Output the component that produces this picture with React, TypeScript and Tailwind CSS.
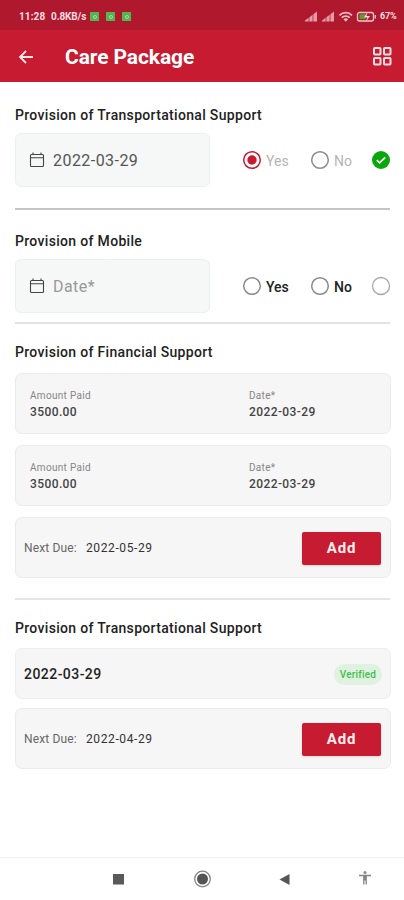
import React from 'react';

interface RadioProps {
    label: string;
    checked?: boolean;
    disabled?: boolean;
}

const payments = [
    { id: 1, amount: '3500.00', date: '2022-03-29' },
    { id: 2, amount: '3500.00', date: '2022-03-29' },
];

const StatusBar: React.FC = () => (
    <div className="flex h-[30px] items-center bg-[#b0182d] pl-[19px] pr-[6px] pt-[3px] text-[10px] font-bold text-[#f8dfe2]">
        <span className="w-[32px] whitespace-nowrap tracking-[0.1px]">11:28</span>
        <span className="w-[39px] whitespace-nowrap text-[10px] tracking-[-0.1px]">0.8KB/s</span>
        <div className="flex gap-[7px]">
            {[0, 1, 2].map((item) => (
                <span key={item} className="flex h-[9px] w-[9px] items-center justify-center bg-[#53b653]">
                    <span className="h-[4px] w-[4px] rounded-full border border-[#a5dc9b]" />
                </span>
            ))}
        </div>
        <svg className="ml-auto" width="72" height="12" viewBox="0 0 72 12" fill="none">
            <path d="M0 10.500V9.500L12 0.500V10.500Z" fill="#e79aa5" />
            <path d="M17 10.500V9.500L29 0.500V10.500Z" fill="#e79aa5" />
            <path d="M4 3v8M8 1v10M21 3v8M25 1v10" stroke="#b0182d" strokeWidth="0.7" />
            <path d="M34.500 4.300C38 0.800 43.500 0.800 47 4.300M36.800 6.700C39 4.500 42.500 4.500 44.700 6.700" stroke="#f0bcc3" strokeWidth="1.800" />
            <path d="M38.500 8.200C40 7 41.500 7 43 8.200L40.800 10.800Z" fill="#f0bcc3" />
            <rect x="52.500" y="1.500" width="16" height="8.500" rx="2" stroke="#f0c6cc" strokeWidth="1.300" />
            <rect x="54.500" y="3.200" width="6" height="5" fill="#5d9d2d" />
            <path d="M62.500 1L59 6.500h3.500L60.500 11L65 5h-3.500Z" fill="#f6dfe2" />
            <path d="M70.300 4v3.500" stroke="#f0c6cc" strokeWidth="1.300" />
        </svg>
        <span className="ml-[3px] w-[18px] whitespace-nowrap text-[9px] tracking-[-0.2px]">67%</span>
    </div>
);

const Header: React.FC = () => (
    <header className="flex h-[52px] items-center bg-[#c61b30] pl-[18px] pr-[12px] text-white">
        <svg className="mt-px" width="16" height="16" viewBox="0 0 16 16" fill="none" stroke="#fbe6e8" strokeWidth="1.800">
            <path d="M15 8H2.200M8 2L2 8l6 6" />
        </svg>
        <h1 className="ml-[31px] pt-[3px] text-[21px] font-bold leading-none tracking-[-0.1px]">Care Package</h1>
        <svg className="ml-auto" width="20" height="20" viewBox="0 0 20 20" fill="none" stroke="#fbdfe2" strokeWidth="2">
            <rect x="2" y="2" width="6.500" height="6.500" rx="0.800" />
            <rect x="12" y="2" width="6.500" height="6.500" rx="0.800" />
            <rect x="2" y="12" width="6.500" height="6.500" rx="0.800" />
            <rect x="12" y="12" width="6.500" height="6.500" rx="0.800" />
        </svg>
    </header>
);

const Heading: React.FC<{ children: React.ReactNode }> = ({ children }) => (
    <h2 className="h-[20px] whitespace-nowrap text-[14px] font-medium leading-[20px] tracking-[0.32px] text-[#222222]">{children}</h2>
);

const DateField: React.FC<{ value?: string }> = ({ value }) => (
    <div className="flex h-[54px] w-[195px] shrink-0 items-center rounded-[6px] border border-[#edf0f0] bg-[#f6f7f7] pl-[13px]">
        <svg width="16" height="16" viewBox="0 0 16 16" fill="none" stroke="#444444" strokeWidth="1.100">
            <rect x="1.500" y="2.500" width="13" height="12" rx="1" />
            <path d="M1.500 5.800h13M4 0.500v2M12 0.500v2" />
        </svg>
        <span className={`ml-[8px] pt-[2px] text-[16px] tracking-[0.45px] ${value ? 'text-[#555555]' : 'text-[#999999]'}`}>
            {value || 'Date*'}
        </span>
    </div>
);

const Radio: React.FC<RadioProps> = ({ label, checked, disabled }) => (
    <div className="flex w-[68px] shrink-0 items-center">
        <svg width="20" height="20" viewBox="0 0 20 20" fill="none">
            <circle cx="10" cy="10" r="8.300" stroke={checked ? '#c61b30' : '#8b8b8b'} strokeWidth="1.500" />
            {checked && <circle cx="10" cy="10" r="4.700" fill="#c61b30" />}
        </svg>
        <span className={`ml-[4px] pt-[2px] text-[14px] ${disabled ? 'text-[#b5b5b5]' : 'font-medium text-[#222222]'}`}>{label}</span>
    </div>
);

const PaymentCard: React.FC<{ amount: string; date: string }> = ({ amount, date }) => (
    <div className="flex h-[61px] items-center rounded-[7px] border border-[#ebebeb] bg-[#f6f6f6] pl-[14px] pt-px">
        <div className="w-[219px]">
            <p className="text-[10px] leading-[15px] tracking-[0.3px] text-[#858585]">Amount Paid</p>
            <p className="text-[12px] font-medium leading-[18px] tracking-[0.4px] text-[#444444]">{amount}</p>
        </div>
        <div>
            <p className="text-[10px] leading-[15px] tracking-[0.3px] text-[#858585]">Date*</p>
            <p className="text-[12px] font-medium leading-[18px] tracking-[0.4px] text-[#444444]">{date}</p>
        </div>
    </div>
);

const NextDueCard: React.FC<{ date: string }> = ({ date }) => (
    <div className="flex h-[61px] items-center rounded-[7px] border border-[#ebebeb] bg-[#f6f6f6] pl-[8px] pr-[9px] text-[12px]">
        <span className="w-[62px] whitespace-nowrap tracking-[0.15px] text-[#666666]">Next Due:</span>
        <span className="text-[#333333] tracking-[0.6px]">{date}</span>
        <button className="ml-auto mt-px h-[33px] w-[79px] rounded-[2px] bg-[#c61b30] text-[15px] font-bold tracking-[0.8px] text-[#fdeeee] shadow-sm">Add</button>
    </div>
);

const NavBar: React.FC = () => (
    <nav className="mt-auto flex h-[43px] items-center border-t border-[#f1f1f1]">
        <svg width="404" height="42" viewBox="0 0 404 42">
            <rect x="113" y="16" width="11" height="10.500" fill="#595959" />
            <circle cx="202.500" cy="21" r="7.800" fill="none" stroke="#858585" strokeWidth="1.300" />
            <circle cx="202.500" cy="21" r="5.500" fill="#555555" />
            <path d="M279.500 21.500L289.500 16v11Z" fill="#555555" />
            <circle cx="365" cy="14.500" r="1.500" fill="#888888" />
            <path d="M359 17.500h12M363.800 17.500v9M366.200 17.500v9M365 17.500v5" stroke="#858585" strokeWidth="1.300" fill="none" />
        </svg>
    </nav>
);

const App: React.FC = () => {
    return (
        <div className="flex h-[900px] w-[404px] flex-col overflow-hidden bg-white font-['Roboto',sans-serif]">
            <StatusBar />
            <Header />
            <main className="pl-[15px] pr-[13px] pt-[23px]">
                <Heading>Provision of Transportational Support</Heading>
                <div className="mt-[8px] flex items-center">
                    <DateField value="2022-03-29" />
                    <div className="ml-[32px] flex items-center">
                        <Radio label="Yes" checked disabled />
                        <Radio label="No" disabled />
                        <svg className="-ml-[7px] shrink-0" width="20" height="20" viewBox="0 0 20 20" fill="none">
                            <circle cx="10" cy="10" r="9" fill="#08a80d" />
                            <path d="M5.800 10.200l2.800 2.700 5.600-5.600" stroke="white" strokeWidth="1.700" />
                        </svg>
                    </div>
                </div>
                <hr className="mr-px mt-[21px] border-t-2 border-[#c6c6c6]" />

                <div className="mt-[21px]">
                    <Heading>Provision of Mobile</Heading>
                </div>
                <div className="mt-[8px] flex items-center">
                    <DateField />
                    <div className="ml-[32px] flex items-center">
                        <Radio label="Yes" />
                        <Radio label="No" />
                        <svg className="-ml-[7px] shrink-0" width="20" height="20" viewBox="0 0 20 20" fill="none">
                            <circle cx="10" cy="10" r="8.500" stroke="#a8a8a8" strokeWidth="1.300" />
                        </svg>
                    </div>
                </div>
                <hr className="mr-px mt-[9px] border-t-2 border-[#e2e2e2]" />

                <div className="mt-[18px]">
                    <Heading>Provision of Financial Support</Heading>
                </div>
                <div className="mt-[11px] flex flex-col gap-[11px]">
                    {payments.map((payment) => (
                        <PaymentCard key={payment.id} amount={payment.amount} date={payment.date} />
                    ))}
                    <NextDueCard date="2022-05-29" />
                </div>
                <hr className="mr-px mt-[20px] border-t-2 border-[#e6e6e6]" />

                <div className="mt-[18px]">
                    <Heading>Provision of Transportational Support</Heading>
                </div>
                <div className="mt-[10px] flex flex-col gap-[9px]">
                    <div className="flex h-[51px] items-center justify-between rounded-[7px] border border-[#eeeeee] bg-[#f6f6f6] pl-[8px] pr-[8px] pt-px">
                        <span className="text-[14px] font-medium tracking-[0.45px] text-[#222222]">2022-03-29</span>
                        <span className="flex h-[21px] w-[48px] items-center justify-center rounded-full bg-[#dff2e0] text-[10px] font-medium tracking-[0.2px] text-[#45bd51]">Verified</span>
                    </div>
                    <NextDueCard date="2022-04-29" />
                </div>
            </main>
            <NavBar />
        </div>
    );
};

export default App;
